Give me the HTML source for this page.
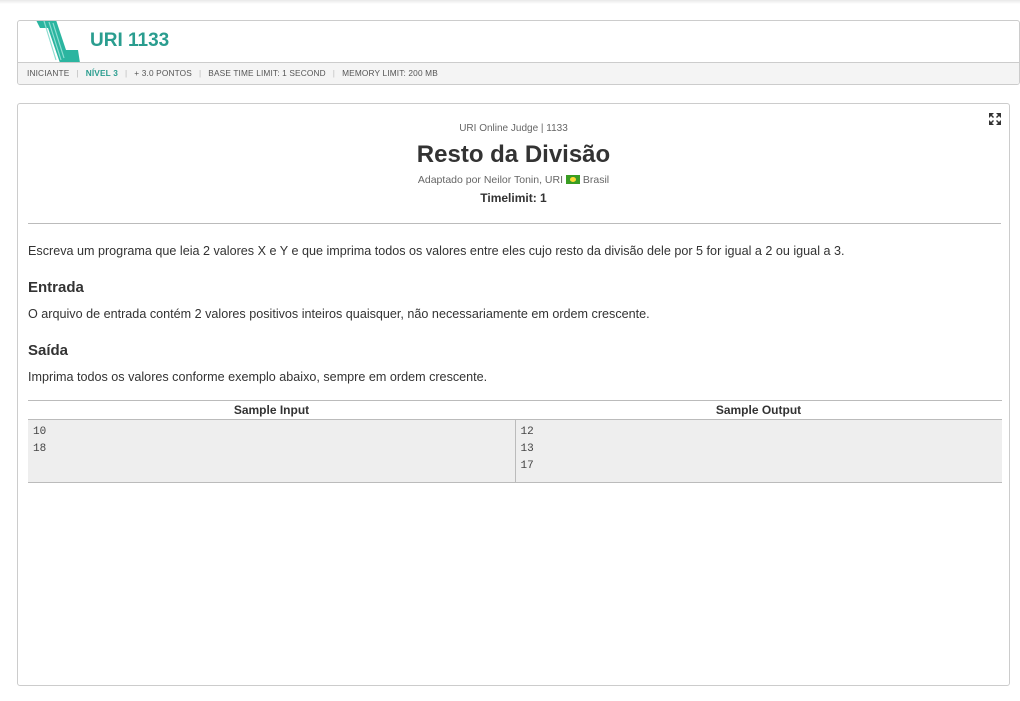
<!DOCTYPE html>
<html><head><meta charset="utf-8"><style>
*{margin:0;padding:0;box-sizing:border-box}
body{width:1020px;height:701px;background:#fff;font-family:"Liberation Sans",sans-serif;color:#333;position:relative;overflow:hidden}
.top{position:absolute;left:0;top:0;width:1020px;height:4px;background:linear-gradient(#e8e8e8,#fff)}
.hdr{position:absolute;left:17px;top:20px;width:1003px;height:65px;border:1px solid #ccc;border-radius:3px;background:#fff;overflow:hidden}
.hdr .bar{position:absolute;left:0;right:0;top:41px;height:23px;background:#f4f4f4;border-top:1px solid #ccc;font-size:8.3px;letter-spacing:0.15px;color:#555;line-height:21px;padding-left:9px;white-space:nowrap}
.bar b{color:#2a9d8f}
.bar i{font-style:normal;color:#bbb;margin:0 7px}
.title{position:absolute;left:72px;top:9px;font-size:19px;font-weight:bold;color:#2a9d8f}
.main{position:absolute;left:17px;top:103px;width:993px;height:583px;border:1px solid #ccc;border-radius:3px;background:#fff}
.c{position:absolute;left:0;width:100%;text-align:center}
p{position:absolute;left:10px;font-size:12.6px;color:#333}
h3{position:absolute;left:10px;font-size:15px;font-weight:bold;color:#333}
table{position:absolute;left:10px;top:296px;width:974px;border-collapse:collapse}
th{font-size:12px;height:19px;border-top:1px solid #bbb;border-bottom:1px solid #bbb;font-weight:bold}
td{background:#eee;font-family:"Liberation Mono",monospace;font-size:11px;line-height:17px;padding:4px 5px 5px;vertical-align:top;color:#444;border-bottom:1px solid #bbb;height:63px}
</style></head><body>
<div class="top"></div>
<div class="hdr">
<svg style="position:absolute;left:16px;top:-1px" width="50" height="43" viewBox="0 0 50 43"><path d="M2 0 L22 0 L32 30 L44 30 L46 43 L26 43 L14 8 L6 8 Z" fill="#2bb5a0"/><path d="M10 1 L22 40 M15 2 L27 40 M19 3 L30 38" stroke="#8fded2" stroke-width="1.2"/></svg>
<div class="title">URI 1133</div>
<div class="bar">INICIANTE<i>|</i><b>NÍVEL 3</b><i>|</i>+ 3.0 PONTOS<i>|</i>BASE TIME LIMIT: 1 SECOND<i>|</i>MEMORY LIMIT: 200 MB</div>
</div>
<div class="main">
<svg style="position:absolute;left:970px;top:8px" width="14" height="14" viewBox="0 0 14 14" fill="#333"><path d="M1 1h5l-2 2 2 2-1 1-2-2-2 2z"/><path d="M13 1v5l-2-2-2 2-1-1 2-2-2-2z"/><path d="M1 13v-5l2 2 2-2 1 1-2 2 2 2z"/><path d="M13 13h-5l2-2-2-2 1-1 2 2 2-2z"/></svg>
<div class="c" style="top:19px;font-size:10px;color:#666">URI Online Judge | 1133</div>
<div class="c" style="top:37px;font-size:24px;font-weight:bold;color:#333">Resto da Divisão</div>
<div class="c" style="top:70px;font-size:10.5px;color:#666">Adaptado por Neilor Tonin, URI <span style="display:inline-block;width:14px;height:9px;background:#3a9d23;vertical-align:-1px;position:relative"><span style="position:absolute;left:4px;top:2px;width:6px;height:5px;background:#fdd835;border-radius:50%"></span></span> Brasil</div>
<div class="c" style="top:87px;font-size:12px;font-weight:bold;color:#333">Timelimit: 1</div>
<div style="position:absolute;left:10px;right:8px;top:119px;border-top:1px solid #bbb"></div>
<p style="top:140px">Escreva um programa que leia 2 valores X e Y e que imprima todos os valores entre eles cujo resto da divisão dele por 5 for igual a 2 ou igual a 3.</p>
<h3 style="top:175px">Entrada</h3>
<p style="top:203px">O arquivo de entrada contém 2 valores positivos inteiros quaisquer, não necessariamente em ordem crescente.</p>
<h3 style="top:238px">Saída</h3>
<p style="top:266px">Imprima todos os valores conforme exemplo abaixo, sempre em ordem crescente.</p>
<table><tr><th style="width:487px">Sample Input</th><th>Sample Output</th></tr>
<tr><td style="border-right:1px solid #bbb">10<br>18</td><td>12<br>13<br>17</td></tr></table>
</div>
</body></html>
